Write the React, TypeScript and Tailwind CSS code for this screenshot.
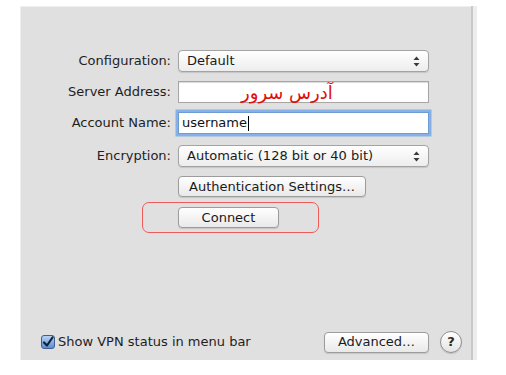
import React from 'react'

const font = { fontFamily: '"DejaVu Sans", "Liberation Sans", sans-serif' }

function Arrows() {
  return (
    <svg width="7" height="11" viewBox="0 0 7 11" className="shrink-0">
      <path d="M3.5 0.5 L6.5 4 L0.5 4 Z" fill="#3a3a3a" />
      <path d="M3.5 10.5 L6.5 7 L0.5 7 Z" fill="#3a3a3a" />
    </svg>
  )
}

function Popup({ value }: { value: string }) {
  return (
    <div className="h-[22px] w-[251px] flex items-center justify-between pl-[8px] pr-[8px] rounded-[4px] border border-[#a3a3a3] bg-gradient-to-b from-[#ffffff] to-[#ededed] shadow-[0_1px_1px_rgba(0,0,0,0.12)] text-[13px] text-[#1a1a1a]">
      <span>{value}</span>
      <Arrows />
    </div>
  )
}

function Button({ children, w }: { children: React.ReactNode; w: string }) {
  return (
    <div
      className={`h-[21px] ${w} flex items-center justify-center rounded-[4px] border border-[#9c9c9c] bg-gradient-to-b from-[#ffffff] to-[#e9e9e9] shadow-[0_1px_1px_rgba(0,0,0,0.12)] text-[13px] text-[#1a1a1a]`}
    >
      {children}
    </div>
  )
}

function Label({ children }: { children: React.ReactNode }) {
  return <div className="text-right text-[13px] text-[#1e1e1e]">{children}</div>
}

export default function App() {
  return (
    <div className="min-h-screen bg-white pt-[6px] pl-[20px]" style={font}>
      <div className="flex h-[354px] w-[457px]">
        <div className="w-[451px] bg-[#e0e0e0] border-l border-t border-[#efefef] flex flex-col">
          <div className="grid grid-cols-[150px_251px] gap-x-[7px] items-center mt-[43px]">
            <Label>Configuration:</Label>
            <Popup value="Default" />
          </div>

          <div className="grid grid-cols-[150px_251px] gap-x-[7px] items-center mt-[9px]">
            <Label>Server Address:</Label>
            <div className="h-[22px] border border-[#a6a6a6] bg-white shadow-[inset_0_1px_1px_rgba(0,0,0,0.15)] flex items-center pl-[62px]">
              <span className="text-[18px] leading-none text-[#e00d0d] mt-[2px]" dir="rtl">
                آدرس سرور
              </span>
            </div>
          </div>

          <div className="grid grid-cols-[150px_251px] gap-x-[7px] items-center mt-[9px]">
            <Label>Account Name:</Label>
            <div className="h-[22px] border border-[#6f9bd4] bg-white ring-[2.5px] ring-[#86b0e6] flex items-center pl-[3px] text-[13px] text-[#111]">
              username
              <span className="w-[1px] h-[15px] bg-black ml-[1px]" />
            </div>
          </div>

          <div className="grid grid-cols-[150px_251px] gap-x-[7px] items-center mt-[11px]">
            <Label>Encryption:</Label>
            <Popup value="Automatic (128 bit or 40 bit)" />
          </div>

          <div className="grid grid-cols-[150px_251px] gap-x-[7px] items-center mt-[9px]">
            <div />
            <Button w="w-[188px]">Authentication Settings…</Button>
          </div>

          <div className="grid grid-cols-[150px_251px] gap-x-[7px] items-center mt-[5px]">
            <div />
            <div className="ml-[-36px] w-[177px] h-[31px] rounded-[7px] border border-[#ee5a5a] flex items-center pl-[35px]">
              <Button w="w-[101px]">Connect</Button>
            </div>
          </div>

          <div className="mt-auto mb-[7px] flex items-center">
            <div className="ml-[20px] w-[14px] h-[14px] rounded-[3px] border border-[#3f5f8f] bg-gradient-to-b from-[#b8d3f2] to-[#5c8fd0] flex items-center justify-center">
              <svg width="12" height="12" viewBox="0 0 12 12">
                <path d="M2 6.5 L5 9.5 L10.5 1.5" stroke="#10213f" strokeWidth="2.2" fill="none" strokeLinecap="round" strokeLinejoin="round" />
              </svg>
            </div>
            <span className="ml-[3px] text-[13px] text-[#1e1e1e]">Show VPN status in menu bar</span>
            <div className="ml-auto flex items-center">
              <Button w="w-[105px]">Advanced…</Button>
              <div className="ml-[11px] mr-[9px] w-[22px] h-[22px] rounded-full border border-[#909090] bg-gradient-to-b from-[#ffffff] to-[#e4e4e4] shadow-[0_1px_1px_rgba(0,0,0,0.15)] flex items-center justify-center text-[13px] font-bold text-[#2a2a2a]">
                ?
              </div>
            </div>
          </div>
        </div>
        <div className="w-[2px] bg-[#c8c8c8]" />
        <div className="w-[4px] bg-[#ededed]" />
      </div>
    </div>
  )
}
